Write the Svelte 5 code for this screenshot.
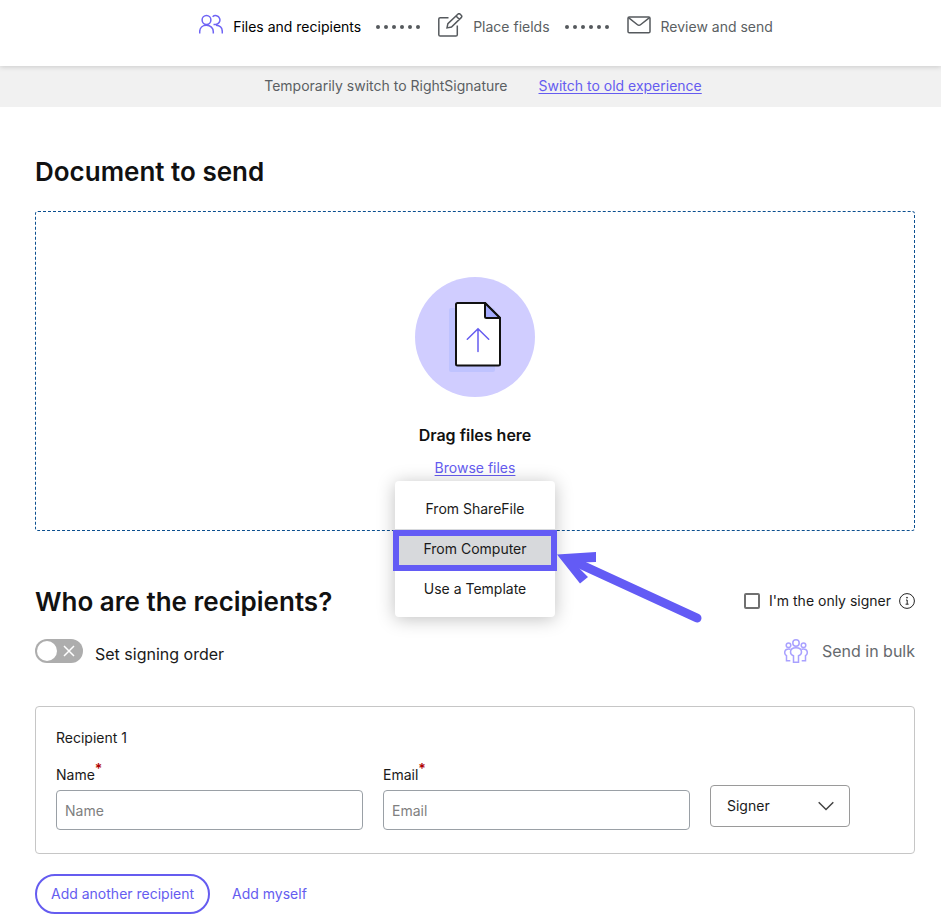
<script>
  let onlySigner = $state(false);
  let signingOrder = $state(false);
  let role = $state("Signer");
  let name = $state("");
  let email = $state("");

  const sources = ["From ShareFile", "From Computer", "Use a Template"];
  const activeSource = "From Computer";
  const dots = [0, 1, 2, 3, 4, 5];
</script>

{#snippet separator()}
  <li class="dots" aria-hidden="true">
    {#each dots as dot (dot)}
      <span></span>
    {/each}
  </li>
{/snippet}

<header>
  <ol class="steps">
    <li class="step current">
      <svg width="24" height="24" viewBox="0 0 24 24">
        <circle cx="7.5" cy="7" r="4.4" />
        <path d="M.7 20.5v-1.700C.7 15 3.500 12.300 7.500 12.300S14.300 15 14.300 18.800v1.700" />
        <path d="M13.600 3.700a4.400 4.400 0 1 1 2.900 7.700h-2M17 12.300c3.800.2 6.300 2.800 6.300 6.500v1.700" />
      </svg>
      <span>Files and recipients</span>
    </li>
    {@render separator()}
    <li class="step">
      <svg width="25" height="24" viewBox="0 0 25 24">
        <path d="M10.500 4.700H2.200a1.400 1.400 0 0 0-1.400 1.400v15.600a1.400 1.400 0 0 0 1.400 1.400h15.700a1.400 1.400 0 0 0 1.400-1.400V12.500" />
        <path d="M9 14.900l.9-4.300L19.800 1.200a1.700 1.700 0 0 1 2.400 0l1 1a1.700 1.700 0 0 1 0 2.400L13.500 14zM18 3l3.500 3.500" />
      </svg>
      <span>Place fields</span>
    </li>
    {@render separator()}
    <li class="step">
      <svg width="24" height="24" viewBox="0 0 24 24">
        <rect x="1" y="4" width="22" height="15.800" rx="1.300" />
        <path d="M1.500 4.600l8.700 6.900a2.900 2.900 0 0 0 3.600 0l8.700-6.900" />
      </svg>
      <span>Review and send</span>
    </li>
  </ol>
</header>

<div class="banner">
  <span>Temporarily switch to RightSignature</span>
  <a href="#old">Switch to old experience</a>
</div>

<main>
  <h2>Document to send</h2>

  <section class="dropzone">
    <svg class="upload" width="120" height="120" viewBox="0 0 120 120">
      <circle cx="60" cy="60" r="60" fill="#d0cdff" />
      <rect x="34" y="31" width="46" height="64" rx="2" fill="#bfc3ff" />
      <path d="M42 26h28l15 15v46a1.500 1.500 0 0 1-1.500 1.500H42.500A1.500 1.500 0 0 1 41 87V27.500A1.500 1.500 0 0 1 42.500 26z" fill="#fff" stroke="#111" stroke-width="2" />
      <path d="M70 26l15 15H71.500A1.500 1.500 0 0 1 70 39.500z" fill="#a5acff" stroke="#111" stroke-width="2" stroke-linejoin="round" />
      <path d="M63 74.500V52M52.300 62.300L63 51.700l10.700 10.600" fill="none" stroke="#655cf0" stroke-width="1.500" stroke-linecap="round" />
    </svg>
    <p class="drag">Drag files here</p>
    <div class="browse">
      <a href="#browse">Browse files</a>
      <div class="menu">
        {#each sources as source (source)}
          <button type="button" class:active={source === activeSource}>{source}</button>
        {/each}
        <svg class="arrow" width="148" height="76" viewBox="0 0 148 76">
          <path d="M16 10L140 67" fill="none" stroke="#635bf5" stroke-width="9" stroke-linecap="round" />
          <path d="M0 3.500L39 1v10L25 11.500 22 17 31 26l-8 6.500z" fill="#635bf5" />
        </svg>
      </div>
    </div>
  </section>

  <div class="row title-row">
    <h2>Who are the recipients?</h2>
    <div class="only">
      <label>
        <input type="checkbox" bind:checked={onlySigner} />
        I'm the only signer
      </label>
      <svg width="16" height="16" viewBox="0 0 16 16" fill="none" stroke="#222">
        <circle cx="8" cy="8" r="7.400" />
        <path d="M7 7h1.200v4M6.600 11.200h3" />
        <circle cx="8" cy="4.700" r=".5" />
      </svg>
    </div>
  </div>

  <div class="row">
    <label class="order">
      <input type="checkbox" role="switch" bind:checked={signingOrder} />
      <span class="track">
        <svg width="12" height="12" viewBox="0 0 12 12"><path d="M1 1l10 10M11 1L1 11" stroke="#fff" stroke-width="1.500" /></svg>
      </span>
      <span class="order-text">Set signing order</span>
    </label>
    <button type="button" class="bulk">
      <svg width="24" height="24" viewBox="0 0 24 24" fill="none" stroke="#a9a1ff" stroke-width="1.500">
        <circle cx="12" cy="4" r="3.200" />
        <circle cx="4.500" cy="6.200" r="2.300" />
        <circle cx="19.500" cy="6.200" r="2.300" />
        <path d="M9.500 23.300v-6.500c-2-.6-3-1.700-3-3.800 0-2.700 2.200-4.300 5.500-4.300s5.500 1.600 5.500 4.300c0 2.100-1 3.200-3 3.800v6.500z" />
        <path d="M6.500 10.200C3 9.300.7 10.800.7 13.500c0 1.500.6 2.500 1.800 3.200v5.100h3.800M17.500 10.200c3.500-.9 5.800.6 5.800 3.300 0 1.500-.6 2.500-1.800 3.200v5.100h-3.800" />
      </svg>
      Send in bulk
    </button>
  </div>

  <section class="recipient">
    <h3>Recipient 1</h3>
    <div class="fields">
      <div class="field">
        <label for="name">Name<sup>*</sup></label>
        <input id="name" type="text" placeholder="Name" bind:value={name} />
      </div>
      <div class="field">
        <label for="email">Email<sup>*</sup></label>
        <input id="email" type="email" placeholder="Email" bind:value={email} />
      </div>
      <div class="role">
        <select aria-label="Role" bind:value={role}>
          <option>Signer</option>
          <option>CC</option>
        </select>
        <svg width="16" height="10" viewBox="0 0 16 10"><path d="M.7 1.200L8 8.500l7.300-7.300" fill="none" stroke="#444" stroke-width="1.500" /></svg>
      </div>
    </div>
  </section>

  <div class="actions">
    <button type="button" class="outline">Add another recipient</button>
    <button type="button" class="text">Add myself</button>
  </div>
</main>

<style>
  :global(body) {
    background: #fff;
    color: #1a1a1a;
    font: 14px/20px Inter, "Liberation Sans", sans-serif;
  }

  h2, h3, p, ol {
    margin: 0;
    padding: 0;
  }

  button, input, select {
    font: inherit;
    color: inherit;
    box-sizing: border-box;
    margin: 0;
  }

  button {
    border: 0;
    background: none;
    cursor: pointer;
  }

  a {
    color: #655cf0;
    text-underline-offset: 2px;
  }

  svg {
    flex: none;
  }

  header {
    position: relative;
    display: flex;
    justify-content: center;
    padding: 13px 0 29px 31px;
    box-shadow: 0 1px 5px rgba(0, 0, 0, 0.16);
  }

  .steps {
    display: flex;
    gap: 15px;
    list-style: none;
  }

  .step {
    display: flex;
    gap: 10px;
    color: #5b5f63;
  }

  .step svg {
    fill: none;
    stroke: #55595d;
    stroke-width: 1.5;
  }

  .step span {
    padding-top: 4px;
    height: 20px;
  }

  .current {
    color: #000;
  }

  .step.current svg {
    stroke: #6f64f5;
  }

  .dots {
    display: flex;
    gap: 4px;
    padding: 12px 3px 0 0;
  }

  .dots span {
    width: 4px;
    height: 4px;
    border-radius: 50%;
    background: #55595d;
  }

  .banner {
    display: flex;
    justify-content: center;
    gap: 31px;
    padding: 10px 0 11px 25px;
    background: #f1f1f1;
    color: #5b5f63;
  }

  main {
    padding: 49px 26px 6px 35px;
  }

  h2 {
    font-size: 26px;
    line-height: 32px;
    font-weight: 600;
    color: #111;
  }

  .dropzone {
    display: flex;
    flex-direction: column;
    align-items: center;
    box-sizing: border-box;
    min-height: 320px;
    margin: 23px 0 55px;
    padding-top: 65px;
    border: 1px dashed #0b4f8f;
    border-radius: 3px;
  }

  .drag {
    margin: 28px 0 13px;
    font-size: 16px;
    font-weight: 600;
    color: #111;
  }

  .browse {
    position: relative;
  }

  .menu {
    position: absolute;
    z-index: 1;
    top: 23px;
    left: 50%;
    width: 160px;
    margin-left: -80px;
    padding: 8px 0;
    box-sizing: border-box;
    border-radius: 4px;
    background: #fff;
    box-shadow: 0 2px 18px rgba(0, 0, 0, 0.25);
  }

  .menu button {
    display: block;
    position: relative;
    width: 100%;
    height: 40px;
    padding: 0;
  }

  .menu .active {
    background: #d7d9dc;
  }

  .menu .active::after {
    content: "";
    position: absolute;
    inset: 1px -2px -2px;
    border: 6px solid #635bf5;
  }

  .arrow {
    position: absolute;
    top: 70px;
    left: 162px;
  }

  .row {
    display: flex;
    align-items: center;
    justify-content: space-between;
  }

  .title-row {
    margin-bottom: 21px;
  }

  .only {
    display: flex;
    align-items: center;
    gap: 8px;
    padding-bottom: 2px;
  }

  .only label {
    display: flex;
    align-items: center;
    gap: 9px;
  }

  .only input {
    appearance: none;
    width: 16px;
    height: 16px;
    border: 2px solid #707070;
    border-radius: 2px;
  }

  .only input:checked {
    background: #655cf0;
  }

  .order {
    position: relative;
    display: flex;
    align-items: center;
    gap: 12px;
    height: 24px;
    font-size: 16px;
    line-height: 24px;
  }

  .order input {
    position: absolute;
    width: 48px;
    height: 24px;
    opacity: 0;
  }

  .order-text {
    padding-top: 6px;
  }

  .track {
    display: flex;
    align-items: center;
    justify-content: space-between;
    box-sizing: border-box;
    width: 48px;
    height: 24px;
    padding: 0 8px 0 2px;
    border-radius: 12px;
    background: #adadad;
  }

  .track::before {
    content: "";
    width: 20px;
    height: 20px;
    border-radius: 50%;
    background: #fff;
  }

  .bulk {
    display: flex;
    align-items: center;
    gap: 14px;
    padding: 0;
    font-size: 16px;
    line-height: 24px;
    color: #666a6e;
  }

  .recipient {
    margin: 43px 0 20px;
    padding: 21px 20px 23px;
    border: 1px solid #c6c6c6;
    border-radius: 4px;
  }

  h3 {
    font-size: 14px;
    line-height: 20px;
    font-weight: 400;
    margin-bottom: 17px;
  }

  .fields {
    display: flex;
    align-items: flex-end;
    gap: 20px;
    padding-right: 44px;
  }

  .field {
    flex: 1;
  }

  .field label {
    display: block;
    margin-bottom: 5px;
  }

  sup {
    line-height: 0;
    font-size: 14px;
    font-weight: 600;
    color: #b00000;
  }

  .field input {
    display: block;
    width: 100%;
    height: 40px;
    padding: 0 8px;
    border: 1px solid #9aa0a6;
    border-radius: 4px;
    background: #fff;
  }

  .field input::placeholder {
    color: #808080;
  }

  .role {
    position: relative;
    padding-bottom: 3px;
  }

  .role select {
    display: block;
    appearance: none;
    width: 140px;
    height: 42px;
    padding: 0 16px;
    border: 1px solid #9a9a9a;
    border-radius: 4px;
    background: #fff;
  }

  .role svg {
    position: absolute;
    right: 16px;
    top: 16px;
    pointer-events: none;
  }

  .actions {
    display: flex;
    gap: 22px;
    color: #655cf0;
  }

  .outline {
    height: 40px;
    padding: 0 14px;
    border: 2px solid #655cf0;
    border-radius: 20px;
  }

  .text {
    padding: 0;
  }
</style>
